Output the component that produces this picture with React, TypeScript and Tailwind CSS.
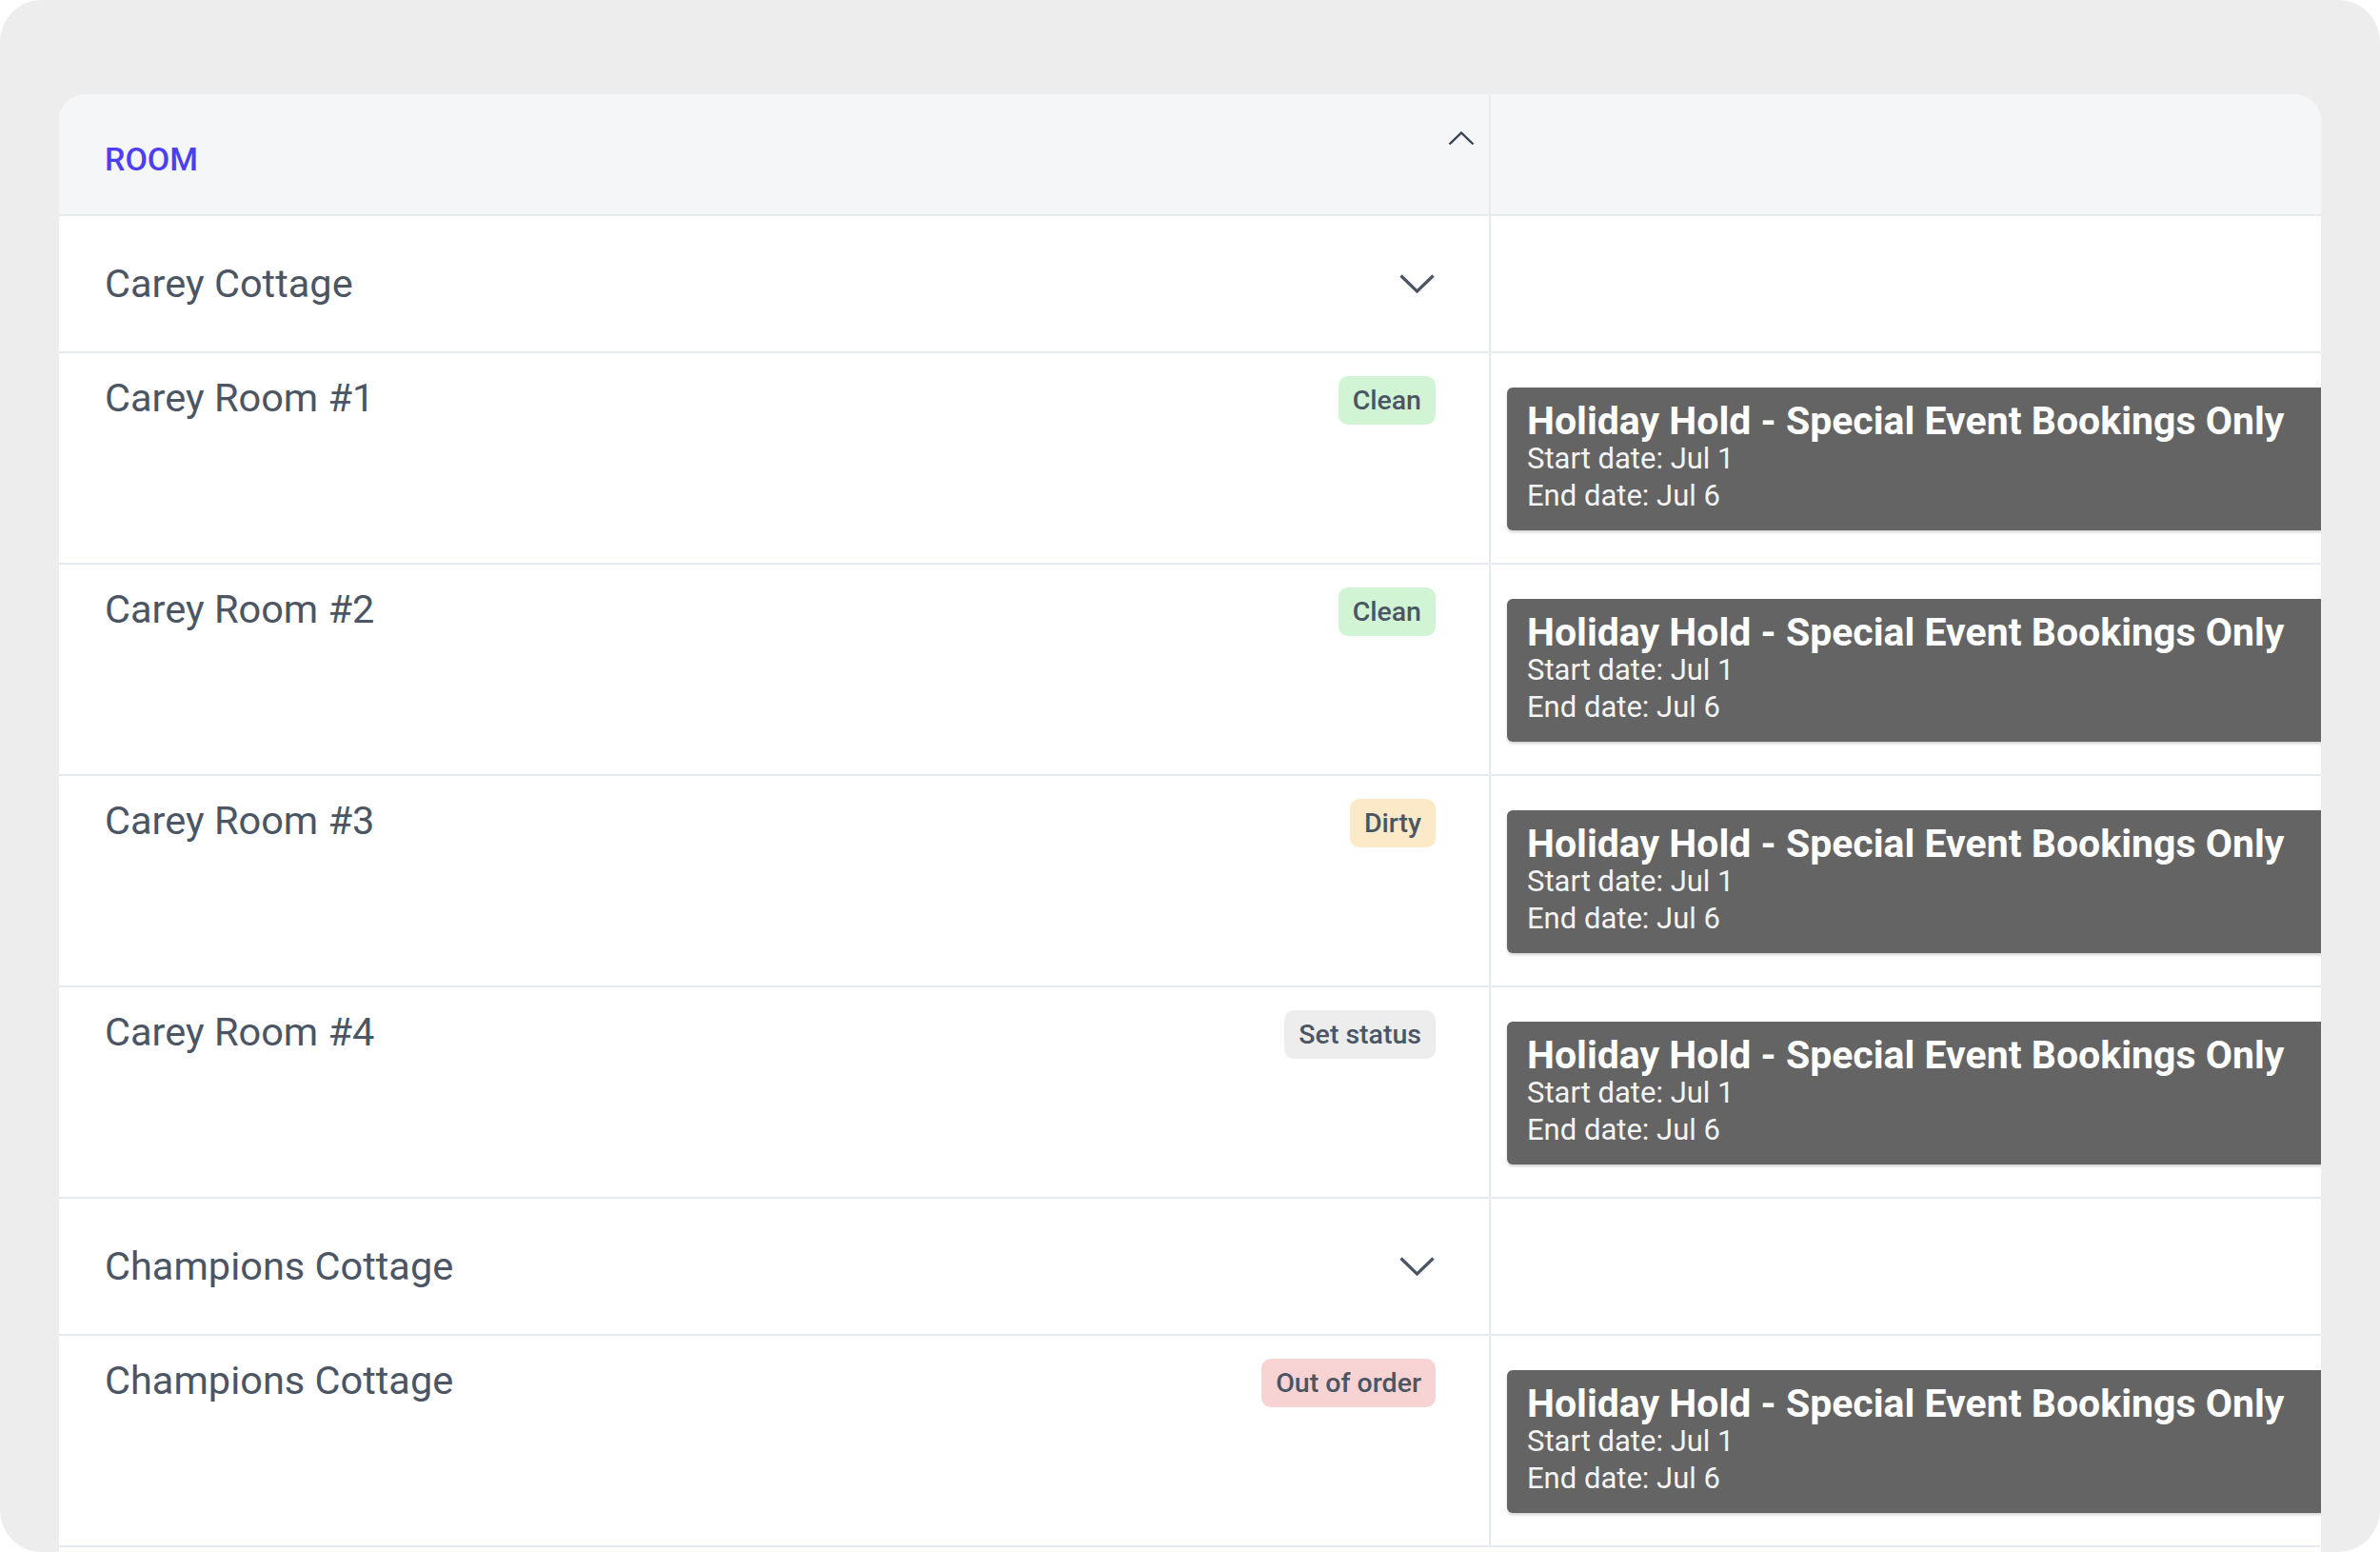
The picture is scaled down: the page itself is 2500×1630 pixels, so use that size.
const rooms = [
  { type: "group", name: "Carey Cottage" },
  { type: "room", name: "Carey Room #1", status: "Clean" },
  { type: "room", name: "Carey Room #2", status: "Clean" },
  { type: "room", name: "Carey Room #3", status: "Dirty" },
  { type: "room", name: "Carey Room #4", status: "Set status" },
  { type: "group", name: "Champions Cottage" },
  { type: "room", name: "Champions Cottage", status: "Out of order" },
];

const badgeColors: Record<string, string> = {
  Clean: "bg-[#d1f5d4]",
  Dirty: "bg-[#fbe9c8]",
  "Set status": "bg-[#ededed]",
  "Out of order": "bg-[#f8d3d4]",
};

function Chevron({ up }: { up?: boolean }) {
  if (up) {
    return (
      <svg width="28" height="15" viewBox="0 0 28 15" fill="none" className="text-[#374151]">
        <polyline points="1.5,13.5 14,1.5 26.5,13.5" stroke="currentColor" strokeWidth="2.4" />
      </svg>
    );
  }
  return (
    <svg width="37" height="20" viewBox="0 0 37 20" fill="none" className="text-[#4b5563]">
      <polyline points="1.5,1.5 18.5,18 35.5,1.5" stroke="currentColor" strokeWidth="3.2" />
    </svg>
  );
}

function Booking() {
  return (
    <div className="w-[900px] h-[150px] shrink-0 rounded-[6px] bg-[#646464] pl-[21px] pt-[15px] text-white shadow-[0_2px_3px_rgba(0,0,0,0.18)]">
      <div className="text-[41px] font-bold leading-[40px]">Holiday Hold - Special Event Bookings Only</div>
      <div className="text-[31px] leading-[39px] text-[#f4f4f4]">Start date: Jul 1</div>
      <div className="text-[31px] leading-[39px] text-[#f4f4f4]">End date: Jul 6</div>
    </div>
  );
}

export default function App() {
  return (
    <div className="w-[2500px] h-[1630px] bg-white" style={{ fontFamily: "Roboto, 'Noto Sans', sans-serif" }}>
      <div className="h-full rounded-[44px] bg-[#ededed] overflow-hidden pl-[62px] pr-[62px] pt-[99px]">
        <div className="h-full rounded-t-[28px] bg-white overflow-hidden">
          {/* header */}
          <div className="grid grid-cols-[1504px_1fr] h-[128px] bg-[#f5f6f8] border-b-2 border-[#e6eaf1]">
            <div className="flex justify-between border-r-2 border-[#e6eaf1] pl-[48px] pr-[15px]">
              <span className="self-center pt-[10px] text-[34px] font-medium text-[#4e3ef2]">ROOM</span>
              <span className="mt-[39px]">
                <Chevron up />
              </span>
            </div>
            <div />
          </div>

          {rooms.map((r, i) =>
            r.type === "group" ? (
              <div key={i} className="grid grid-cols-[1504px_1fr] h-[144px] border-b-2 border-[#e6eaf1]">
                <div className="flex items-center justify-between border-r-2 border-[#e6eaf1] pl-[48px] pr-[57px]">
                  <span className="text-[41.5px] text-[#4b5563]">{r.name}</span>
                  <Chevron />
                </div>
                <div />
              </div>
            ) : (
              <div key={i} className="grid grid-cols-[1504px_1fr] h-[222px] border-b-2 border-[#e6eaf1]">
                <div className="flex items-start justify-between border-r-2 border-[#e6eaf1] pl-[48px] pr-[56px] pt-[22px]">
                  <span className="text-[41.5px] leading-[50px] text-[#4b5563]">{r.name}</span>
                  <span
                    className={`mt-[2px] h-[51px] rounded-[10px] px-[15px] text-[28.5px] font-medium leading-[51px] text-[#4b5563] ${badgeColors[r.status!]}`}
                  >
                    {r.status}
                  </span>
                </div>
                <div className="overflow-hidden pl-[17px] pt-[36px]">
                  <Booking />
                </div>
              </div>
            )
          )}
        </div>
      </div>
    </div>
  );
}
